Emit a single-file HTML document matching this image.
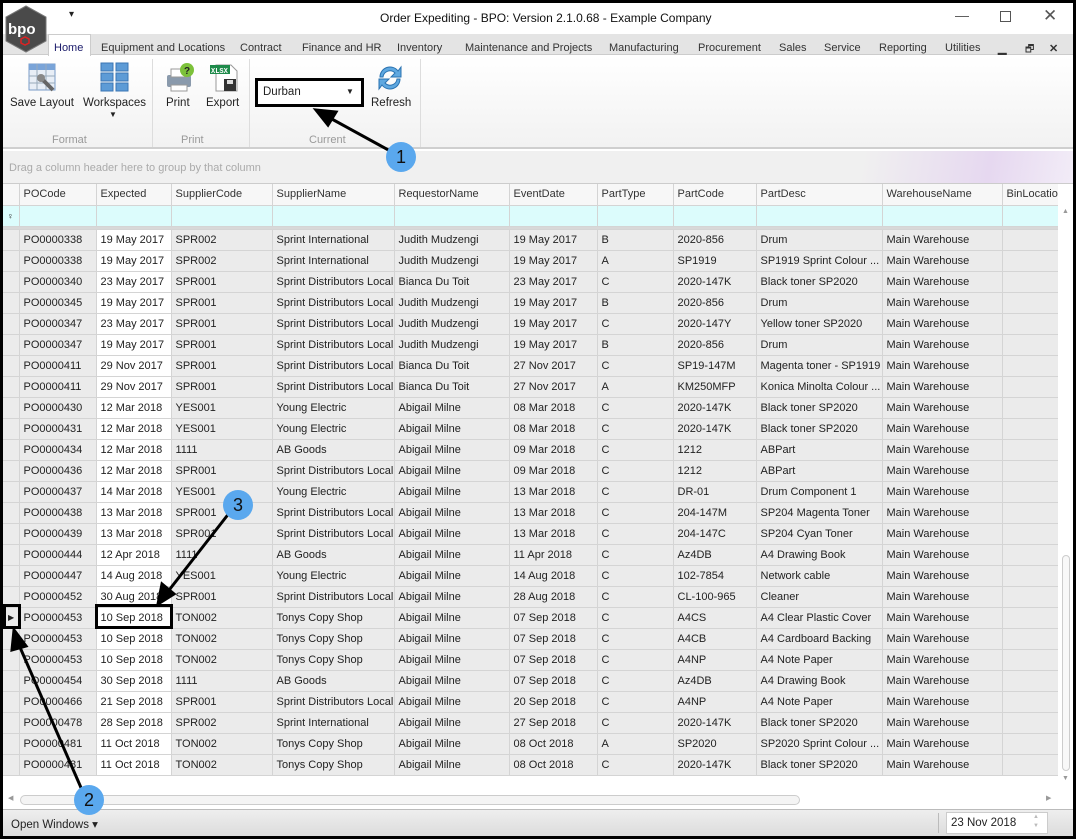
<!DOCTYPE html>
<html><head><meta charset="utf-8"><style>
*{box-sizing:border-box;margin:0;padding:0}
body{width:1076px;height:839px;overflow:hidden;background:#000;font-family:"Liberation Sans",sans-serif;font-size:11px;color:#222;position:relative}
.win{position:absolute;left:3px;top:3px;width:1070px;height:833px;background:#fff;overflow:hidden}
.abs{position:absolute}
.tabs span{position:absolute;top:39px;font-size:11px;color:#333}
table{border-collapse:collapse;table-layout:fixed;position:absolute;left:0;top:0;width:1059px}
td{height:21px;border-right:1px solid #d4d4d4;border-bottom:1px solid #d4d4d4;padding:0 0 0 4px;white-space:nowrap;overflow:hidden;background:#ebebeb;font-size:11px;color:#222}
td.w{background:#fff}
td.i{background:#ebebeb;padding:0}
.hd td{background:#f7f7f7;color:#333;height:21px}
.fl td{background:#dcfcfc;height:21px}
.lbl{font-size:11.5px;color:#222;position:absolute}
.grp{position:absolute;top:131px;font-size:11px;color:#999}
.circ{position:absolute;width:30px;height:30px;border-radius:50%;background:#5aa8ee;color:#111;font-size:18px;text-align:center;line-height:30px}
.box{position:absolute;border:3px solid #000}
</style></head><body>
<div class="win">
 <div class="abs" style="left:0;top:0;width:1070px;height:31px;background:#fff"></div>
 <div class="abs" style="left:0;top:31px;width:1070px;height:21px;background:#e4e4e4;border-bottom:1px solid #ccc"></div>
 <svg class="abs" style="left:1px;top:2px" width="44" height="48" viewBox="0 0 44 48"><polygon points="22,1 42,12 42,36 22,47 2,36 2,12" fill="#4a4a4a" stroke="#777"/><text x="4" y="29" font-family="Liberation Sans" font-size="15" fill="#fff" font-weight="bold">bpo</text><polygon points="17,34 21,32 25,34 25,38 21,40 17,38" fill="none" stroke="#d22" stroke-width="1.5"/></svg>
 <div class="abs" style="left:66px;top:6px;font-size:10px">▾</div>
 <div class="abs" style="left:377px;top:8px;font-size:12px;color:#111">Order Expediting - BPO: Version 2.1.0.68 - Example Company</div>
 <div class="abs" style="left:952px;top:4px;font-size:14px;color:#555">—</div>
 <div class="abs" style="left:997px;top:8px;width:11px;height:11px;border:1px solid #555"></div>
 <div class="abs" style="left:1040px;top:3px;font-size:17px;color:#555">✕</div>
 <div class="abs" style="left:45px;top:31px;width:43px;height:23px;background:#fff;border:1px solid #ccc;border-bottom:none"></div>
 <div class="tabs">
 <span style="left:51px;color:#1a1a6a">Home</span><span style="left:98px">Equipment and Locations</span><span style="left:237px">Contract</span><span style="left:299px">Finance and HR</span><span style="left:394px">Inventory</span><span style="left:462px">Maintenance and Projects</span><span style="left:606px">Manufacturing</span><span style="left:695px">Procurement</span><span style="left:776px">Sales</span><span style="left:821px">Service</span><span style="left:876px">Reporting</span><span style="left:942px">Utilities</span>
 <span style="left:995px;font-weight:bold">▁</span><span style="left:1022px;font-size:10px">🗗</span><span style="left:1046px;font-weight:bold">✕</span>
 </div>
 <div class="abs" style="left:0;top:53px;width:1070px;height:93px;background:linear-gradient(#fff,#f2f2f2);border-bottom:2px solid #cfcfcf"></div>
 <div class="abs" style="left:149px;top:56px;width:1px;height:88px;background:#ddd"></div>
 <div class="abs" style="left:246px;top:56px;width:1px;height:88px;background:#ddd"></div>
 <div class="abs" style="left:417px;top:56px;width:1px;height:88px;background:#ddd"></div>
 <svg class="abs" style="left:24px;top:59px" width="32" height="32"><rect x="2" y="2" width="26" height="26" fill="#e8eef6" stroke="#7a9cc8"/><rect x="2" y="2" width="26" height="6" fill="#7aa4d8"/><path d="M10 2V28M19 2V28M2 14H28M2 21H28" stroke="#9ab"/><path d="M14 16 L26 28" stroke="#666" stroke-width="4"/><circle cx="14" cy="16" r="4" fill="#888"/></svg>
 <svg class="abs" style="left:96px;top:58px" width="32" height="32"><g fill="#5d9bd6" stroke="#3a76b4"><rect x="2" y="2" width="12" height="8"/><rect x="17" y="2" width="12" height="8"/><rect x="2" y="12" width="12" height="8"/><rect x="17" y="12" width="12" height="8"/><rect x="2" y="22" width="12" height="8"/><rect x="17" y="22" width="12" height="8"/></g></svg>
 <svg class="abs" style="left:160px;top:58px" width="34" height="34"><rect x="4" y="14" width="24" height="12" rx="2" fill="#8a9aac"/><rect x="8" y="8" width="16" height="8" fill="#fff" stroke="#999"/><rect x="8" y="24" width="16" height="6" fill="#fff" stroke="#999"/><circle cx="24" cy="9" r="7" fill="#7cc13a"/><text x="21" y="13" font-size="10" font-weight="bold" fill="#222" font-family="Liberation Sans">?</text></svg>
 <svg class="abs" style="left:204px;top:58px" width="34" height="34"><path d="M9 4H24L30 10V30H9Z" fill="#fff" stroke="#999"/><rect x="3" y="4" width="20" height="9" fill="#1e8a4a"/><text x="4" y="12" font-size="7" fill="#fff" font-weight="bold" font-family="Liberation Mono">XLSX</text><rect x="17" y="18" width="12" height="12" fill="#333"/><rect x="20" y="19" width="6" height="4" fill="#ddd"/></svg>
 <svg class="abs" style="left:371px;top:60px" width="32" height="30"><path d="M6 14A10 10 0 0 1 24 8L27 4V14H17L21 10A7 7 0 0 0 9 14Z" fill="#5fa8e0" stroke="#2a72b0"/><path d="M26 16A10 10 0 0 1 8 22L5 26V16H15L11 20A7 7 0 0 0 23 16Z" fill="#5fa8e0" stroke="#2a72b0"/></svg>
 <div class="lbl" style="left:7px;top:94px">Save Layout</div>
 <div class="lbl" style="left:80px;top:94px">Workspaces</div>
 <div class="abs" style="left:106px;top:107px;font-size:8px">▼</div>
 <div class="lbl" style="left:163px;top:94px">Print</div>
 <div class="lbl" style="left:203px;top:94px">Export</div>
 <div class="lbl" style="left:368px;top:94px">Refresh</div>
 <div class="grp" style="left:49px">Format</div><div class="grp" style="left:178px">Print</div><div class="grp" style="left:306px">Current</div>
 <div class="abs" style="left:252px;top:75px;width:109px;height:29px;border:3px solid #000;background:#fff"></div>
 <div class="abs" style="left:260px;top:83px;font-size:11.5px">Durban</div>
 <div class="abs" style="left:343px;top:84px;font-size:8px">▼</div>
 <div class="abs" style="left:0;top:148px;width:1070px;height:33px;background:linear-gradient(100deg,#f0f0f0 80%,#e6d8f0 92%,#f2ecf7 100%);border-bottom:1px solid #ccc"></div>
 <div class="abs" style="left:6px;top:159px;color:#aaa;font-size:11px">Drag a column header here to group by that column</div>
 <div class="abs" style="left:0;top:181px;width:1055px;height:593px;overflow:hidden;background:#fff">
 <table>
 <colgroup><col style="width:16px"><col style="width:77px"><col style="width:75px"><col style="width:101px"><col style="width:122px"><col style="width:115px"><col style="width:88px"><col style="width:76px"><col style="width:83px"><col style="width:126px"><col style="width:120px"><col style="width:60px"></colgroup>
 <tr class="hd"><td class="i" style="background:#f7f7f7"></td><td>POCode</td><td>Expected</td><td>SupplierCode</td><td>SupplierName</td><td>RequestorName</td><td>EventDate</td><td>PartType</td><td>PartCode</td><td>PartDesc</td><td>WarehouseName</td><td>BinLocationName</td></tr>
 <tr class="fl"><td class="i" style="background:#dcfcfc;font-size:9px;padding-left:4px">♀</td><td></td><td></td><td></td><td></td><td></td><td></td><td></td><td></td><td></td><td></td><td></td></tr>
 <tr><td colspan="12" style="height:3px;background:#d8d8d8;padding:0"></td></tr>
 <tr><td class="i"></td><td>PO0000338</td><td class="w">19 May 2017</td><td>SPR002</td><td>Sprint International</td><td>Judith Mudzengi</td><td>19 May 2017</td><td>B</td><td>2020-856</td><td>Drum</td><td>Main Warehouse</td><td></td></tr>
 <tr><td class="i"></td><td>PO0000338</td><td class="w">19 May 2017</td><td>SPR002</td><td>Sprint International</td><td>Judith Mudzengi</td><td>19 May 2017</td><td>A</td><td>SP1919</td><td>SP1919 Sprint Colour ...</td><td>Main Warehouse</td><td></td></tr>
 <tr><td class="i"></td><td>PO0000340</td><td class="w">23 May 2017</td><td>SPR001</td><td>Sprint Distributors Local</td><td>Bianca Du Toit</td><td>23 May 2017</td><td>C</td><td>2020-147K</td><td>Black toner SP2020</td><td>Main Warehouse</td><td></td></tr>
 <tr><td class="i"></td><td>PO0000345</td><td class="w">19 May 2017</td><td>SPR001</td><td>Sprint Distributors Local</td><td>Judith Mudzengi</td><td>19 May 2017</td><td>B</td><td>2020-856</td><td>Drum</td><td>Main Warehouse</td><td></td></tr>
 <tr><td class="i"></td><td>PO0000347</td><td class="w">23 May 2017</td><td>SPR001</td><td>Sprint Distributors Local</td><td>Judith Mudzengi</td><td>19 May 2017</td><td>C</td><td>2020-147Y</td><td>Yellow toner SP2020</td><td>Main Warehouse</td><td></td></tr>
 <tr><td class="i"></td><td>PO0000347</td><td class="w">19 May 2017</td><td>SPR001</td><td>Sprint Distributors Local</td><td>Judith Mudzengi</td><td>19 May 2017</td><td>B</td><td>2020-856</td><td>Drum</td><td>Main Warehouse</td><td></td></tr>
 <tr><td class="i"></td><td>PO0000411</td><td class="w">29 Nov 2017</td><td>SPR001</td><td>Sprint Distributors Local</td><td>Bianca Du Toit</td><td>27 Nov 2017</td><td>C</td><td>SP19-147M</td><td>Magenta toner - SP1919</td><td>Main Warehouse</td><td></td></tr>
 <tr><td class="i"></td><td>PO0000411</td><td class="w">29 Nov 2017</td><td>SPR001</td><td>Sprint Distributors Local</td><td>Bianca Du Toit</td><td>27 Nov 2017</td><td>A</td><td>KM250MFP</td><td>Konica Minolta Colour ...</td><td>Main Warehouse</td><td></td></tr>
 <tr><td class="i"></td><td>PO0000430</td><td class="w">12 Mar 2018</td><td>YES001</td><td>Young Electric</td><td>Abigail Milne</td><td>08 Mar 2018</td><td>C</td><td>2020-147K</td><td>Black toner SP2020</td><td>Main Warehouse</td><td></td></tr>
 <tr><td class="i"></td><td>PO0000431</td><td class="w">12 Mar 2018</td><td>YES001</td><td>Young Electric</td><td>Abigail Milne</td><td>08 Mar 2018</td><td>C</td><td>2020-147K</td><td>Black toner SP2020</td><td>Main Warehouse</td><td></td></tr>
 <tr><td class="i"></td><td>PO0000434</td><td class="w">12 Mar 2018</td><td>1111</td><td>AB Goods</td><td>Abigail Milne</td><td>09 Mar 2018</td><td>C</td><td>1212</td><td>ABPart</td><td>Main Warehouse</td><td></td></tr>
 <tr><td class="i"></td><td>PO0000436</td><td class="w">12 Mar 2018</td><td>SPR001</td><td>Sprint Distributors Local</td><td>Abigail Milne</td><td>09 Mar 2018</td><td>C</td><td>1212</td><td>ABPart</td><td>Main Warehouse</td><td></td></tr>
 <tr><td class="i"></td><td>PO0000437</td><td class="w">14 Mar 2018</td><td>YES001</td><td>Young Electric</td><td>Abigail Milne</td><td>13 Mar 2018</td><td>C</td><td>DR-01</td><td>Drum Component 1</td><td>Main Warehouse</td><td></td></tr>
 <tr><td class="i"></td><td>PO0000438</td><td class="w">13 Mar 2018</td><td>SPR001</td><td>Sprint Distributors Local</td><td>Abigail Milne</td><td>13 Mar 2018</td><td>C</td><td>204-147M</td><td>SP204 Magenta Toner</td><td>Main Warehouse</td><td></td></tr>
 <tr><td class="i"></td><td>PO0000439</td><td class="w">13 Mar 2018</td><td>SPR001</td><td>Sprint Distributors Local</td><td>Abigail Milne</td><td>13 Mar 2018</td><td>C</td><td>204-147C</td><td>SP204 Cyan Toner</td><td>Main Warehouse</td><td></td></tr>
 <tr><td class="i"></td><td>PO0000444</td><td class="w">12 Apr 2018</td><td>1111</td><td>AB Goods</td><td>Abigail Milne</td><td>11 Apr 2018</td><td>C</td><td>Az4DB</td><td>A4 Drawing Book</td><td>Main Warehouse</td><td></td></tr>
 <tr><td class="i"></td><td>PO0000447</td><td class="w">14 Aug 2018</td><td>YES001</td><td>Young Electric</td><td>Abigail Milne</td><td>14 Aug 2018</td><td>C</td><td>102-7854</td><td>Network cable</td><td>Main Warehouse</td><td></td></tr>
 <tr><td class="i"></td><td>PO0000452</td><td class="w">30 Aug 2018</td><td>SPR001</td><td>Sprint Distributors Local</td><td>Abigail Milne</td><td>28 Aug 2018</td><td>C</td><td>CL-100-965</td><td>Cleaner</td><td>Main Warehouse</td><td></td></tr>
 <tr><td class="i" style="font-size:8px;padding-left:5px">▶</td><td>PO0000453</td><td class="w">10 Sep 2018</td><td>TON002</td><td>Tonys Copy Shop</td><td>Abigail Milne</td><td>07 Sep 2018</td><td>C</td><td>A4CS</td><td>A4 Clear Plastic Cover</td><td>Main Warehouse</td><td></td></tr>
 <tr><td class="i"></td><td>PO0000453</td><td class="w">10 Sep 2018</td><td>TON002</td><td>Tonys Copy Shop</td><td>Abigail Milne</td><td>07 Sep 2018</td><td>C</td><td>A4CB</td><td>A4 Cardboard Backing</td><td>Main Warehouse</td><td></td></tr>
 <tr><td class="i"></td><td>PO0000453</td><td class="w">10 Sep 2018</td><td>TON002</td><td>Tonys Copy Shop</td><td>Abigail Milne</td><td>07 Sep 2018</td><td>C</td><td>A4NP</td><td>A4 Note Paper</td><td>Main Warehouse</td><td></td></tr>
 <tr><td class="i"></td><td>PO0000454</td><td class="w">30 Sep 2018</td><td>1111</td><td>AB Goods</td><td>Abigail Milne</td><td>07 Sep 2018</td><td>C</td><td>Az4DB</td><td>A4 Drawing Book</td><td>Main Warehouse</td><td></td></tr>
 <tr><td class="i"></td><td>PO0000466</td><td class="w">21 Sep 2018</td><td>SPR001</td><td>Sprint Distributors Local</td><td>Abigail Milne</td><td>20 Sep 2018</td><td>C</td><td>A4NP</td><td>A4 Note Paper</td><td>Main Warehouse</td><td></td></tr>
 <tr><td class="i"></td><td>PO0000478</td><td class="w">28 Sep 2018</td><td>SPR002</td><td>Sprint International</td><td>Abigail Milne</td><td>27 Sep 2018</td><td>C</td><td>2020-147K</td><td>Black toner SP2020</td><td>Main Warehouse</td><td></td></tr>
 <tr><td class="i"></td><td>PO0000481</td><td class="w">11 Oct 2018</td><td>TON002</td><td>Tonys Copy Shop</td><td>Abigail Milne</td><td>08 Oct 2018</td><td>A</td><td>SP2020</td><td>SP2020 Sprint Colour ...</td><td>Main Warehouse</td><td></td></tr>
 <tr><td class="i"></td><td>PO0000481</td><td class="w">11 Oct 2018</td><td>TON002</td><td>Tonys Copy Shop</td><td>Abigail Milne</td><td>08 Oct 2018</td><td>C</td><td>2020-147K</td><td>Black toner SP2020</td><td>Main Warehouse</td><td></td></tr>
 </table>
 </div>
 <div class="abs" style="left:1055px;top:202px;width:15px;height:604px;background:#fff"></div>
 <div class="abs" style="left:1059px;top:205px;font-size:7px;color:#999">▲</div>
 <div class="abs" style="left:1059px;top:552px;width:8px;height:216px;border:1px solid #ccc;border-radius:4px;background:#f8f8f8"></div>
 <div class="abs" style="left:1059px;top:772px;font-size:7px;color:#999">▼</div>
 <div class="abs" style="left:0;top:774px;width:1055px;height:32px;background:#fff"></div>
 <div class="abs" style="left:5px;top:791px;font-size:7px;color:#999">◀</div>
 <div class="abs" style="left:17px;top:792px;width:780px;height:10px;border:1px solid #ccc;border-radius:5px;background:#f4f4f4"></div>
 <div class="abs" style="left:1043px;top:791px;font-size:7px;color:#999">▶</div>
 <div class="abs" style="left:0;top:806px;width:1070px;height:27px;background:linear-gradient(#eee,#dcdcdc);border-top:1px solid #bbb"></div>
 <div class="abs" style="left:8px;top:814px;font-size:11.5px">Open Windows ▾</div>
 <div class="abs" style="left:935px;top:810px;width:1px;height:20px;background:#bbb"></div>
 <div class="abs" style="left:943px;top:809px;width:102px;height:22px;background:#fff;border:1px solid #ccc"></div>
 <div class="abs" style="left:948px;top:814px;font-size:11.5px">23 Nov 2018</div>
 <div class="abs" style="left:1030px;top:810px;font-size:6px;color:#bbb;line-height:9px">▲<br>▼</div>
</div>
<div class="box" style="left:95px;top:604px;width:78px;height:25px"></div>
<div class="box" style="left:3px;top:604px;width:18px;height:25px"></div>
<svg class="abs" style="left:0;top:0" width="1076" height="839">
 <g stroke="#000" stroke-width="3" fill="#000">
 <line x1="392" y1="152" x2="330" y2="118"/><polygon points="316,110 336,112 328,125" />
 <line x1="230" y1="512" x2="166" y2="594"/><polygon points="158,604 162,584 174,594"/>
 <line x1="82" y1="790" x2="19" y2="645"/><polygon points="14,630 26,646 12,650"/>
 </g>
</svg>
<div class="circ" style="left:386px;top:142px">1</div>
<div class="circ" style="left:223px;top:490px">3</div>
<div class="circ" style="left:74px;top:785px">2</div>
</body></html>
